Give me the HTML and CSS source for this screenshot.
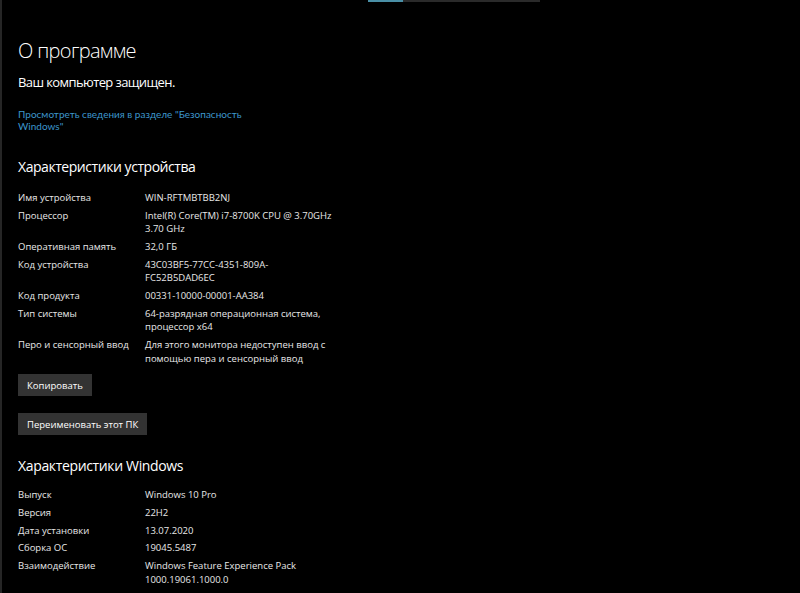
FILE: index.html
```html
<!DOCTYPE html>
<html lang="ru">
<head>
<meta charset="utf-8">
<title>О программе</title>
<link rel="stylesheet" href="styles.css">
</head>
<body>
<div class="page">
  <div class="progress"><div class="progress-fill"></div></div>
  <main class="content">
    <h1 class="title">О программе</h1>
    <p class="status">Ваш компьютер защищен.</p>
    <a class="link" href="#"><span class="link-line">Просмотреть сведения в разделе "Безопасность</span><span class="link-line">Windows"</span></a>

    <h2 class="section">Характеристики устройства</h2>
    <div class="specs">
      <div class="label">Имя устройства</div><div class="value">WIN-RFTMBTBB2NJ</div>
      <div class="label">Процессор</div><div class="value">Intel(R) Core(TM) i7-8700K CPU @ 3.70GHz<br>3.70 GHz</div>
      <div class="label">Оперативная память</div><div class="value">32,0 ГБ</div>
      <div class="label">Код устройства</div><div class="value">43C03BF5-77CC-4351-809A-<br>FC52B5DAD6EC</div>
      <div class="label">Код продукта</div><div class="value">00331-10000-00001-AA384</div>
      <div class="label">Тип системы</div><div class="value">64-разрядная операционная система,<br>процессор x64</div>
      <div class="label">Перо и сенсорный ввод</div><div class="value">Для этого монитора недоступен ввод с<br>помощью пера и сенсорный ввод</div>
    </div>
    <div class="buttons">
      <button class="btn">Копировать</button>
      <button class="btn">Переименовать этот ПК</button>
    </div>

    <h2 class="section section-win">Характеристики Windows</h2>
    <div class="specs">
      <div class="label">Выпуск</div><div class="value">Windows 10 Pro</div>
      <div class="label">Версия</div><div class="value">22H2</div>
      <div class="label">Дата установки</div><div class="value">13.07.2020</div>
      <div class="label">Сборка ОС</div><div class="value">19045.5487</div>
      <div class="label">Взаимодействие</div><div class="value">Windows Feature Experience Pack<br>1000.19061.1000.0</div>
    </div>
  </main>
</div>
</body>
</html>
```

FILE: styles.css
```css
* { box-sizing: border-box; }
html, body {
  margin: 0;
  padding: 0;
  background: #000;
}
body {
  font-family: "Open Sans", "Noto Sans", "DejaVu Sans", sans-serif;
  color: #f2f2f2;
}
.page {
  width: 800px;
  height: 593px;
  overflow: hidden;
  border-left: 2px solid #262626;
  background: #000;
}
.progress {
  margin-left: 366px;
  width: 172px;
  height: 2px;
  background: #2a2a2a;
  display: flex;
}
.progress-fill {
  width: 35px;
  background: #4a8fa6;
}
.content {
  padding-left: 16px;
}
.title {
  margin: 36px 0 0;
  font-size: 20px;
  font-weight: 300;
  line-height: 26px;
  letter-spacing: -0.65px;
  color: #fff;
}
.status {
  margin: 9px 0 0;
  font-size: 13px;
  line-height: 18px;
  font-weight: 400;
  letter-spacing: -0.6px;
  color: #fff;
}
.link {
  display: flex;
  flex-direction: column;
  margin-top: 17px;
  font-family: Lato, "Open Sans", sans-serif;
  font-size: 10px;
  color: #3d96cc;
  text-decoration: none;
  letter-spacing: 0;
}
.link-line {
  display: block;
  height: 12px;
  line-height: 12px;
}
.section {
  margin: 25px 0 0;
  font-size: 14px;
  line-height: 20px;
  font-weight: 400;
  letter-spacing: -0.45px;
  color: #fff;
}
.specs {
  margin-top: 14px;
  display: grid;
  grid-template-columns: 127px auto;
  row-gap: 4.25px;
  font-size: 9.5px;
  line-height: 13.5px;
  color: #e8e8e8;
}
.buttons {
  margin-top: 9px;
  display: flex;
  flex-direction: column;
  align-items: flex-start;
  gap: 17px;
}
.btn {
  font-family: inherit;
  font-size: 9.5px;
  color: #fff;
  background: #333;
  border: none;
  height: 22px;
  padding: 0 9px;
}
.section-win {
  margin-top: 21px;
  letter-spacing: -0.35px;
}
.section-win + .specs {
  margin-top: 12px;
}
```
